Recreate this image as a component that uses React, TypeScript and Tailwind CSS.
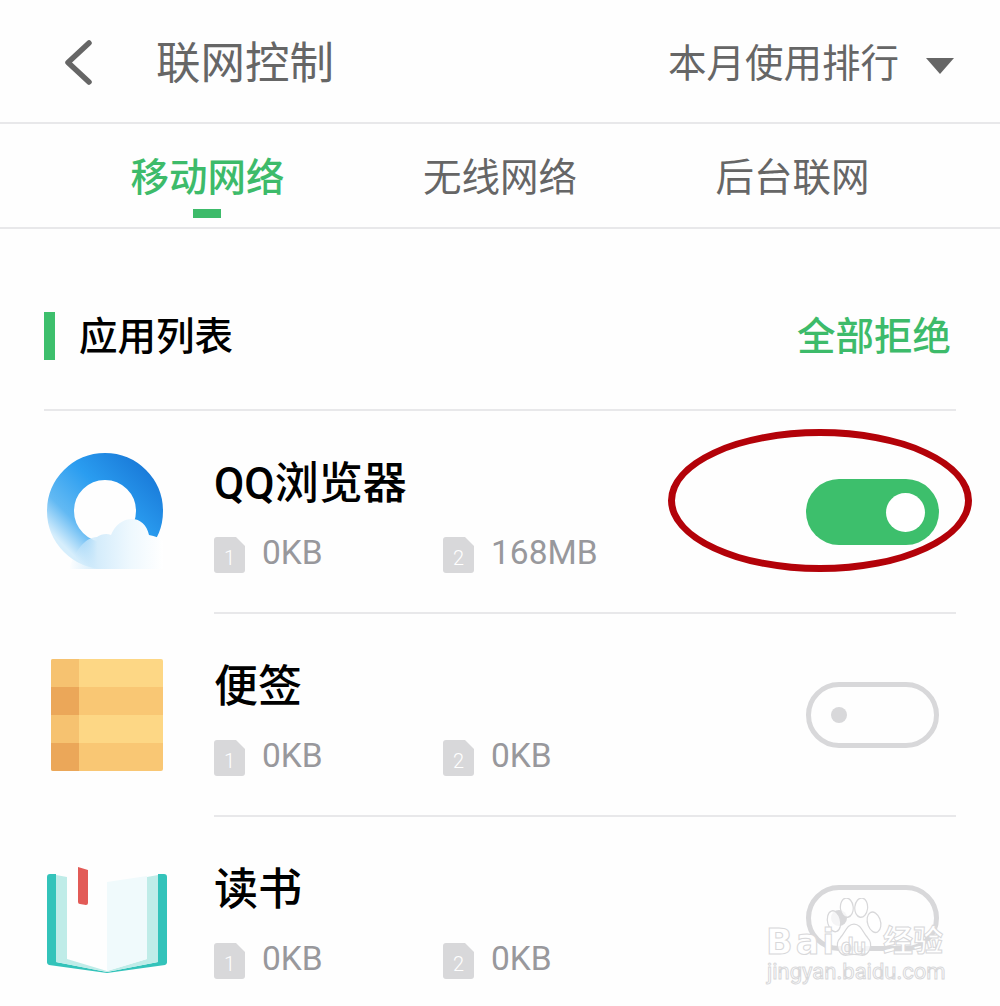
import React from 'react';

const FONT = "font-['Roboto','Noto_Sans_CJK_SC',sans-serif]";

const SimBadge = ({ slot }: { slot: number }) => (
  <svg width="31" height="36" viewBox="0 0 31 36" className="shrink-0">
    <path d="M3 0H22L31 9V33a3 3 0 0 1-3 3H3a3 3 0 0 1-3-3V3a3 3 0 0 1 3-3Z" fill="#d8d8da" />
    <text x="15.5" y="28" textAnchor="middle" fontSize="20" fontWeight="300" fill="#fff" fontFamily="Roboto, sans-serif">
      {slot}
    </text>
  </svg>
);

const QQIcon = () => (
  <svg width="116" height="116" viewBox="0 0 116 116">
    <defs>
      <linearGradient id="qqRing" x1="1" y1="0.05" x2="0.1" y2="0.95">
        <stop offset="0" stopColor="#1a7bd9" />
        <stop offset="0.42" stopColor="#2a9df0" />
        <stop offset="0.78" stopColor="#62b9f3" />
        <stop offset="1" stopColor="#d6eefc" />
      </linearGradient>
      <linearGradient id="qqCloud" x1="0" y1="0" x2="1" y2="0">
        <stop offset="0" stopColor="#cfeafb" stopOpacity="0" />
        <stop offset="0.3" stopColor="#d4ecfb" />
        <stop offset="0.65" stopColor="#eef8fe" />
        <stop offset="1" stopColor="#ffffff" />
      </linearGradient>
    </defs>
    <circle cx="58" cy="58" r="44.5" fill="none" stroke="url(#qqRing)" strokeWidth="27" />
    <path
      d="M22 116C28 98 38 84 50 84C54 81 60 80 64 82C68 72 76 66 85 66C93 66 100 72 102 82C108 83 113 85 116 88V116Z"
      fill="url(#qqCloud)"
    />
  </svg>
);

const NotesIcon = () => (
  <svg width="112" height="112" viewBox="0 0 112 112">
    <clipPath id="notesClip">
      <rect width="112" height="112" rx="2" />
    </clipPath>
    <g clipPath="url(#notesClip)">
      <rect width="112" height="28" fill="#fdd785" />
      <rect y="28" width="112" height="28" fill="#f9c774" />
      <rect y="56" width="112" height="28" fill="#fdd785" />
      <rect y="84" width="112" height="28" fill="#f9c774" />
      <rect width="28" height="28" fill="#f6c270" />
      <rect y="28" width="28" height="28" fill="#eba759" />
      <rect y="56" width="28" height="28" fill="#f6c270" />
      <rect y="84" width="28" height="28" fill="#eba759" />
    </g>
  </svg>
);

const BookIcon = () => (
  <svg width="120" height="106" viewBox="0 0 120 106">
    <path d="M0 10a3 3 0 0 1 3-3h6V95L60 105L111 95V7h6a3 3 0 0 1 3 3V95a3 3 0 0 1-2 3L60 106L2 98a3 3 0 0 1-2-3Z" fill="#33c3ba" />
    <path d="M9 8L20 10V92L60 104L100 92V10L111 8V95L60 105L9 95Z" fill="#bfece8" />
    <path d="M60 15L100 9V92L60 104Z" fill="#f0fafc" />
    <path d="M31 0L41 3V36a2 2 0 0 1-2 2L33 37a2 2 0 0 1-2-2Z" fill="#e25b57" />
  </svg>
);

const AppRow = ({ icon, name, sim1, sim2, on, iconOffset }: { icon: React.ReactNode; name: string; sim1: string; sim2: string; on: boolean; iconOffset: string }) => (
  <div className="flex h-[203px]">
    <div className={`w-[170px] shrink-0 ${iconOffset}`}>{icon}</div>
    <div className="flex flex-1 items-start justify-between border-b-2 border-[#e8e8ea] pr-[17px]">
      <div className="pt-[48px]">
        <div className="text-[44px] leading-[50px] font-medium text-black">{name}</div>
        <div className="mt-[25px] flex items-center">
          <div className="flex w-[229px] items-center gap-[17px]">
            <SimBadge slot={1} />
            <span className="mb-[4px] text-[33.5px] leading-[37px] text-[#98989c]">{sim1}</span>
          </div>
          <div className="flex items-center gap-[17px]">
            <SimBadge slot={2} />
            <span className="mb-[4px] text-[33.5px] leading-[37px] text-[#98989c]">{sim2}</span>
          </div>
        </div>
      </div>
      {on ? (
        <div className="mt-[68px] flex h-[66px] w-[133px] items-center justify-end rounded-full bg-[#3dbf6c] pr-[14px]">
          <div className="size-[39px] rounded-full bg-white" />
        </div>
      ) : (
        <div className="mt-[68px] flex h-[66px] w-[133px] items-center rounded-full border-[5px] border-[#d8d8da] pl-[20px]">
          <div className="size-[16px] rounded-full bg-[#d8d8da]" />
        </div>
      )}
    </div>
  </div>
);

const Watermark = () => (
  <div className="absolute top-[898px] left-[764px] h-[92px] w-[190px] text-white">
    <svg width="56" height="60" viewBox="0 0 70 62" preserveAspectRatio="none" className="absolute top-0 left-[62px]" fill="#ffffff" fillOpacity="0.75" stroke="#d8d8da" strokeWidth="1.5">
      <ellipse cx="10" cy="24" rx="8" ry="11" transform="rotate(-18 10 24)" />
      <ellipse cx="26" cy="10" rx="8" ry="10" transform="rotate(-8 26 10)" />
      <ellipse cx="44" cy="10" rx="8" ry="10" transform="rotate(8 44 10)" />
      <ellipse cx="60" cy="25" rx="8" ry="11" transform="rotate(-25 60 25)" />
      <path d="M35 27C44 27 46 36 52 41C60 48 54 60 44 59C38 58 32 58 26 59C16 60 10 48 18 41C24 36 26 27 35 27Z" />
    </svg>
    <div className="absolute top-[29px] left-[2px] font-['DejaVu_Sans',sans-serif] text-[35px] leading-[30px] font-bold tracking-[3px] text-white [-webkit-text-stroke:1px_#d8d8da]">Bai</div>
    <div className="absolute top-[39px] left-[77px] text-[22px] leading-[20px] font-bold text-white [-webkit-text-stroke:1px_#d8d8da]">du</div>
    <div className="absolute top-[27px] left-[119px] text-[30px] leading-[32px] font-bold text-white [-webkit-text-stroke:1px_#d8d8da]">经验</div>
    <div className="absolute top-[63px] left-[3px] text-[22px] leading-[22px] whitespace-nowrap text-white [-webkit-text-stroke:1px_#d8d8da]">jingyan.baidu.com</div>
  </div>
);

export default function App() {
  return (
    <div className={`relative h-[1006px] w-[1000px] overflow-hidden bg-[#fefefe] ${FONT}`}>
      {/* Top bar */}
      <header className="flex h-[124px] items-center justify-between border-b-2 border-[#e8e8ea] pt-[6px] pr-[46px] pl-[62px]">
        <div className="flex items-center">
          <svg width="33" height="48" viewBox="0 0 33 48" fill="none" stroke="#666666" strokeWidth="5.5" strokeLinecap="round" strokeLinejoin="round">
            <polyline points="27,3 6,22.5 27,42" />
          </svg>
          <h1 className="ml-[61px] text-[44.5px] leading-[60px] font-normal text-[#666666]">联网控制</h1>
        </div>
        <div className="flex items-center gap-[27px]">
          <span className="text-[38.5px] leading-[50px] text-[#666666]">本月使用排行</span>
          <div className="mt-[4px] h-0 w-0 border-x-[14px] border-t-[16px] border-x-transparent border-t-[#666666]" />
        </div>
      </header>

      {/* Tabs */}
      <nav className="flex h-[105px] justify-center border-b-2 border-[#e8e8ea]">
        <div className="relative flex w-[292.5px] justify-center pt-[29px] text-[38.5px] leading-[50px] font-medium text-[#3dbb6a]">
          移动网络
          <div className="absolute top-[85px] left-[132px] h-[9px] w-[28px] bg-[#3dbb6a]" />
        </div>
        <div className="flex w-[292.5px] justify-center pt-[29px] text-[38.5px] leading-[50px] text-[#666666]">无线网络</div>
        <div className="flex w-[292.5px] justify-center pt-[29px] text-[38.5px] leading-[50px] text-[#666666]">后台联网</div>
      </nav>

      {/* List */}
      <section className="px-[44px]">
        <div className="flex h-[182px] items-start justify-between border-b-2 border-[#e8e8ea] pt-[83px] pr-[5px]">
          <div className="flex items-start">
            <div className="h-[48px] w-[11px] bg-[#3dbf6c]" />
            <h2 className="ml-[24px] text-[38.5px] leading-[50px] font-medium text-black">应用列表</h2>
          </div>
          <span className="text-[38.5px] leading-[50px] font-medium text-[#3dbb6a]">全部拒绝</span>
        </div>
        <AppRow icon={<QQIcon />} iconOffset="pt-[42px] pl-[3px]" name="QQ浏览器" sim1="0KB" sim2="168MB" on />
        <AppRow icon={<NotesIcon />} iconOffset="pt-[45px] pl-[7px]" name="便签" sim1="0KB" sim2="0KB" on={false} />
        <AppRow icon={<BookIcon />} iconOffset="pt-[50px] pl-[3px]" name="读书" sim1="0KB" sim2="0KB" on={false} />
      </section>

      {/* Red hand-drawn annotation over the toggle */}
      <div className="absolute top-[429px] left-[668px] h-[143px] w-[304px] rounded-[50%] border-[7px] border-[#b30209]" />
      <Watermark />
    </div>
  );
}
